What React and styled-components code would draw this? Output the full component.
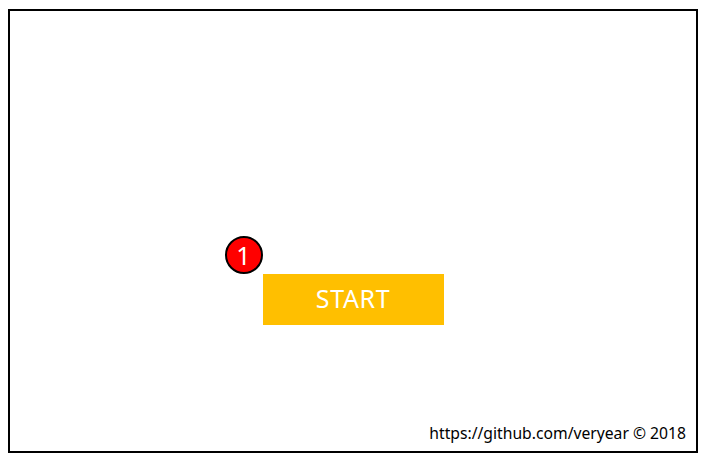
import React from "react";
import styled, { createGlobalStyle } from "styled-components";

const Global = createGlobalStyle`
  body {
    margin: 8px;
    background: #fff;
    font-family: "Noto Sans", sans-serif;
  }
`;

const Frame = styled.div`
  box-sizing: border-box;
  width: 690px;
  height: 444px;
  margin-top: 1px;
  border: 2px solid #000;
  display: flex;
  flex-direction: column;
  align-items: center;
`;

const Stage = styled.div`
  flex: 1;
  display: flex;
  justify-content: center;
  padding-top: 263px;
  width: 100%;
`;

const StartButton = styled.button`
  position: relative;
  width: 181px;
  height: 51px;
  border: none;
  background: #ffbf00;
  color: #fff;
  font-family: "Noto Sans", sans-serif;
  font-size: 25px;
  letter-spacing: 0.6px;
  line-height: 1;
  padding: 0 0 2px;
  cursor: pointer;
`;

const Badge = styled.span`
  position: absolute;
  left: -38px;
  top: -38px;
  box-sizing: border-box;
  width: 38px;
  height: 38px;
  border-radius: 50%;
  border: 2px solid #000;
  background: #f00;
  color: #fff;
  font-size: 25px;
  letter-spacing: 0;
  display: flex;
  align-items: center;
  justify-content: center;
  line-height: 1;
`;

const Footer = styled.div`
  align-self: flex-end;
  padding: 0 10px 7px 0;
  font-size: 15.7px;
  color: #000;
`;

export default function App() {
  return (
    <>
      <Global />
      <Frame>
        <Stage>
          <div>
            <StartButton>
              <Badge>1</Badge>
              START
            </StartButton>
          </div>
        </Stage>
        <Footer>https://github.com/veryear © 2018</Footer>
      </Frame>
    </>
  );
}
